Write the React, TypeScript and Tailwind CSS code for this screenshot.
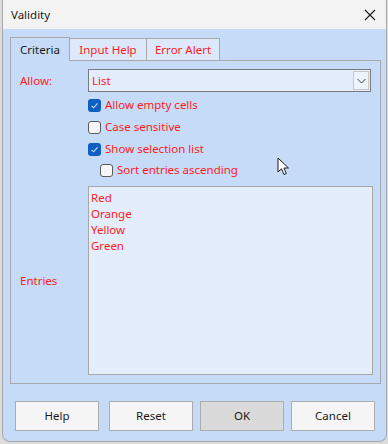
import React from 'react';

const font = { fontFamily: '"Noto Sans", "Open Sans", sans-serif' };

const Check: React.FC<{ checked?: boolean }> = ({ checked }) =>
  checked ? (
    <span className="w-[13px] h-[13px] rounded-[3px] bg-[#0f5fc2] flex items-center justify-center shrink-0">
      <svg width="9" height="9" viewBox="0 0 9 9">
        <path d="M1.5 4.8 L3.6 6.8 L7.5 2.4" fill="none" stroke="#cfe1f7" strokeWidth="1.1" />
      </svg>
    </span>
  ) : (
    <span className="w-[13px] h-[13px] rounded-[3px] bg-[#f6f6f6] border border-[#5a5a5a] shrink-0" />
  );

const Option: React.FC<{ label: string; checked?: boolean; indent?: boolean }> = ({ label, checked, indent }) => (
  <div className={`h-[22px] flex items-center gap-[4px] ${indent ? 'pl-[12px] -mt-px' : ''}`}>
    <Check checked={checked} />
    <span className="text-[11.5px] text-[#ff1a1a]">{label}</span>
  </div>
);

const Btn: React.FC<{ label: string; active?: boolean; className?: string }> = ({ label, active, className }) => (
  <button
    className={`w-[84px] h-[30px] border border-[#adadad] text-[11.5px] text-[#1a1a1a] ${
      active ? 'bg-[#dadada]' : 'bg-[#f5f5f5]'
    } ${className ?? ''}`}
  >
    {label}
  </button>
);

export default function App() {
  return (
    <div className="w-[388px] h-[444px] bg-[#dcdcdc] overflow-hidden relative" style={font}>
      <div className="ml-[2px] w-[385px] h-[442px] border-l border-r border-b border-[#a8a8a8] rounded-b-[8px] overflow-hidden flex flex-col bg-[#c5dbf7]">
        {/* Title bar */}
        <div className="h-[29px] bg-[#f3f3f3] flex items-center justify-between pl-[8px] pr-[10px] shrink-0">
          <span className="text-[11.5px] text-[#1a1a1a]">Validity</span>
          <svg width="12" height="12" viewBox="0 0 12 12">
            <path d="M1 1 L11 11 M11 1 L1 11" stroke="#1a1a1a" strokeWidth="1.1" />
          </svg>
        </div>

        <div className="flex-1 flex flex-col pl-[7px] pt-[8px]">
          {/* Tabs */}
          <div className="flex items-end h-[23px] relative z-10">
            <div className="w-[60px] h-[24px] -mb-px border border-b-0 border-[#a8a8a8] bg-[#c5dbf7] flex items-center justify-center text-[11.5px] text-[#1a1a1a]">
              Criteria
            </div>
            <div className="w-[77px] h-[22px] border-t border-r border-[#a8a8a8] bg-[#dde9fb] flex items-center justify-center text-[11.5px] text-[#ff1a1a]">
              Input Help
            </div>
            <div className="w-[73px] h-[22px] border-t border-r border-[#a8a8a8] bg-[#dde9fb] flex items-center justify-center text-[11.5px] text-[#ff1a1a]">
              Error Alert
            </div>
          </div>

          {/* Panel */}
          <div className="w-[371px] h-[324px] border border-[#a8a8a8] pl-[9px] pt-[8px] flex flex-col">
            <div className="flex items-center h-[23px]">
              <span className="w-[68px] text-[11.5px] text-[#ff1a1a]">Allow:</span>
              <div className="w-[283px] h-[23px] border border-[#7a7a7a] bg-[#e3edfc] flex items-center justify-between">
                <span className="pl-[3px] text-[11.5px] text-[#ff1a1a]">List</span>
                <div className="w-[16px] h-[19px] mr-[1px] bg-[#eef4fd] border border-[#c8c8c8] flex items-center justify-center">
                  <svg width="9" height="6" viewBox="0 0 9 6">
                    <path d="M0.5 1 L4.5 5 L8.5 1" fill="none" stroke="#404040" strokeWidth="1" />
                  </svg>
                </div>
              </div>
            </div>

            <div className="pl-[68px] pt-[2px] flex flex-col">
              <Option label="Allow empty cells" checked />
              <Option label="Case sensitive" />
              <Option label="Show selection list" checked />
              <Option label="Sort entries ascending" indent />
            </div>

            <div className="flex items-center mt-[5px]">
              <span className="w-[68px] text-[11.5px] text-[#ff1a1a]">Entries</span>
              <div className="w-[285px] h-[189px] border border-[#a8a8a8] bg-[#e3edfc] pl-[2px] pt-[3px] flex flex-col text-[11.5px] leading-[16px] text-[#ff1a1a]">
                <span>Red</span>
                <span>Orange</span>
                <span>Yellow</span>
                <span>Green</span>
              </div>
            </div>
          </div>

          {/* Buttons */}
          <div className="flex items-center pt-[17px] pl-[5px]">
            <Btn label="Help" />
            <Btn label="Reset" className="ml-[10px]" />
            <Btn label="OK" active className="ml-[7px]" />
            <Btn label="Cancel" className="ml-[7px]" />
          </div>
        </div>
      </div>

      {/* Mouse pointer */}
      <svg className="absolute left-[277px] top-[157px]" width="14" height="20" viewBox="0 0 14 20">
        <path
          d="M1 1 L1 15 L4.5 11.8 L7 17.5 L9.3 16.5 L6.9 11 L11.5 11 Z"
          fill="#ffffff"
          stroke="#1a1a1a"
          strokeWidth="1"
          strokeLinejoin="round"
        />
      </svg>
    </div>
  );
}
